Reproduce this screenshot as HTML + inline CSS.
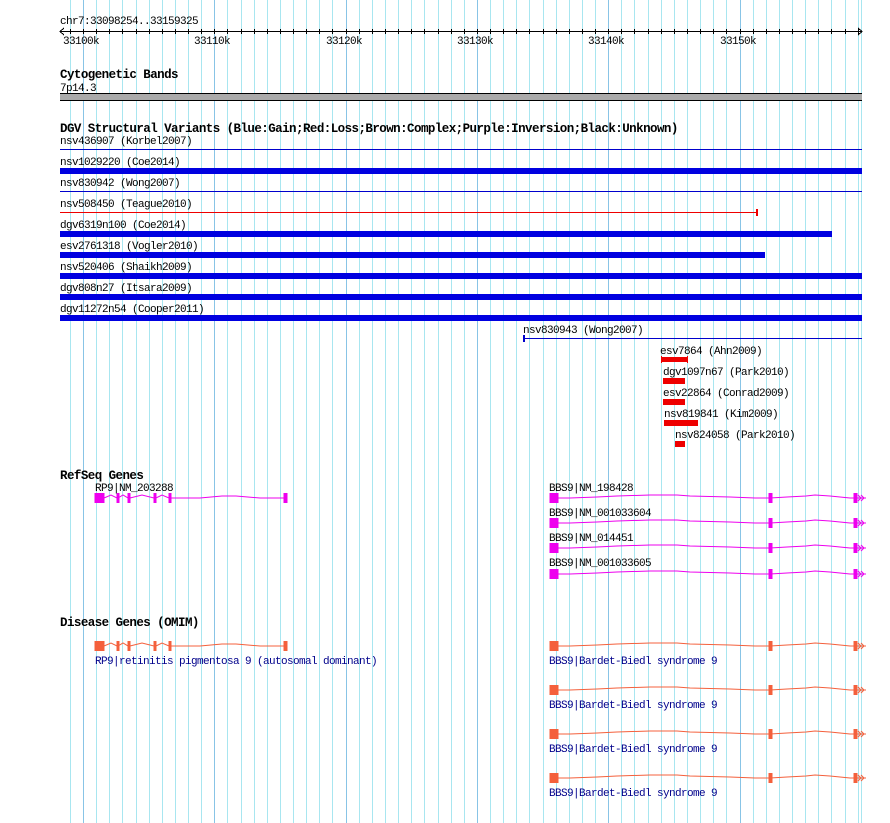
<!DOCTYPE html>
<html><head><meta charset="utf-8"><style>
html,body{margin:0;padding:0;background:#fff;width:890px;height:823px;overflow:hidden}
svg{display:block}
text{font-family:"Liberation Mono",monospace;font-size:11px;letter-spacing:-0.6px;fill:#000}
.b{font-weight:bold;font-size:12.5px;letter-spacing:-0.56px}
.d{fill:#00008b}
</style></head><body>
<svg width="890" height="823" viewBox="0 0 890 823" xmlns="http://www.w3.org/2000/svg" shape-rendering="crispEdges">
<g stroke="#a8e6f0" stroke-width="1" id="grid"></g>
<g id="ticks" stroke="#000"></g>
<line x1="861.5" x2="861.5" y1="0" y2="823" stroke="#a8e6f0"/>
<text x="60" y="24">chr7:33098254..33159325</text>
<line x1="60" x2="862" y1="31.5" y2="31.5" stroke="#000"/>
<polyline points="64,28 60,31.5 64,35" fill="none" stroke="#000"/>
<polyline points="858,28 862,31.5 858,35" fill="none" stroke="#000"/>
<text x="63" y="44">33100k</text><text x="194" y="44">33110k</text><text x="326" y="44">33120k</text><text x="457" y="44">33130k</text><text x="588" y="44">33140k</text><text x="720" y="44">33150k</text>

<text x="60" y="78" class="b">Cytogenetic Bands</text>
<text x="60" y="91">7p14.3</text>
<rect x="60" y="93" width="802" height="8" fill="#000"/>
<rect x="60" y="94" width="802" height="6" fill="#aaaaaa"/>

<text x="60" y="132" class="b">DGV Structural Variants (Blue:Gain;Red:Loss;Brown:Complex;Purple:Inversion;Black:Unknown)</text>
<text x="60" y="144">nsv436907 (Korbel2007)</text>
<rect x="60" y="149" width="802" height="1" fill="#0000cc"/>
<text x="60" y="165">nsv1029220 (Coe2014)</text>
<rect x="60" y="168" width="802" height="6" fill="#0000e0"/>
<text x="60" y="186">nsv830942 (Wong2007)</text>
<rect x="60" y="191" width="802" height="1" fill="#0000cc"/>
<text x="60" y="207">nsv508450 (Teague2010)</text>
<rect x="60" y="212" width="697" height="1" fill="#ee0000"/>
<rect x="756" y="209" width="2" height="7" fill="#ee0000"/>
<text x="60" y="228">dgv6319n100 (Coe2014)</text>
<rect x="60" y="231" width="772" height="6" fill="#0000e0"/>
<text x="60" y="249">esv2761318 (Vogler2010)</text>
<rect x="60" y="252" width="705" height="6" fill="#0000e0"/>
<text x="60" y="270">nsv520406 (Shaikh2009)</text>
<rect x="60" y="273" width="802" height="6" fill="#0000e0"/>
<text x="60" y="291">dgv808n27 (Itsara2009)</text>
<rect x="60" y="294" width="802" height="6" fill="#0000e0"/>
<text x="60" y="312">dgv11272n54 (Cooper2011)</text>
<rect x="60" y="315" width="802" height="6" fill="#0000e0"/>
<text x="523" y="333">nsv830943 (Wong2007)</text>
<rect x="523" y="338" width="339" height="1" fill="#0000cc"/>
<rect x="523" y="335" width="2" height="7" fill="#0000cc"/>
<text x="660" y="354">esv7864 (Ahn2009)</text>
<rect x="661" y="357" width="27" height="5" fill="#ee0000"/>
<rect x="661" y="356" width="1" height="7" fill="#ee0000"/><rect x="687" y="356" width="1" height="7" fill="#ee0000"/>
<text x="663" y="375">dgv1097n67 (Park2010)</text>
<rect x="663" y="378" width="22" height="6" fill="#ee0000"/>
<text x="663" y="396">esv22864 (Conrad2009)</text>
<rect x="663" y="399" width="22" height="6" fill="#ee0000"/>
<text x="664" y="417">nsv819841 (Kim2009)</text>
<rect x="664" y="420" width="34" height="6" fill="#ee0000"/>
<text x="675" y="438">nsv824058 (Park2010)</text>
<rect x="675" y="441" width="10" height="6" fill="#ee0000"/>

<text x="60" y="479" class="b">RefSeq Genes</text>
<defs>
<g id="rp9" shape-rendering="auto">
<rect x="95" y="-4.5" width="9" height="9"/>
<rect x="117" y="-4.5" width="2" height="9"/><rect x="128" y="-4.5" width="2" height="9"/><rect x="154" y="-4.5" width="2" height="9"/><rect x="169" y="-4.5" width="2" height="9"/><rect x="284" y="-4.5" width="3" height="9"/>
<polyline fill="none" stroke-width="1" points="104,0 111,-3 117,0 118,0 123,-3 128,0 130,0 142,-3 154,0 156,0 162,-3 169,0 171,0 200,0 222,-2 236,-2 260,0 285,0"/>
</g>
<g id="bbs" shape-rendering="auto">
<rect x="550" y="-4.5" width="8" height="9"/>
<rect x="769" y="-4.5" width="3" height="9"/>
<rect x="854" y="-4.5" width="3" height="9"/>
<polyline fill="none" stroke-width="1" points="557,0 570,0 597,-1 617,-2 650,-3 677,-3 690,-2 730,-1 755,0 770,0 787,-1 806,-2 815,-3 830,-2 850,0 856,0"/>
<polyline fill="none" stroke-width="1" points="857,0 866,0"/>
<polyline fill="none" stroke-width="1" points="858,-3 861,0 858,3"/>
<polyline fill="none" stroke-width="1" points="861,-3 864,0 861,3"/>
</g>
</defs>
<text x="95" y="491">RP9|NM_203288</text>
<use href="#rp9" y="498" fill="#ee00ee" stroke="#ee00ee"/>
<text x="549" y="491">BBS9|NM_198428</text>
<use href="#bbs" y="498" fill="#ee00ee" stroke="#ee00ee"/>
<text x="549" y="516">BBS9|NM_001033604</text>
<use href="#bbs" y="523" fill="#ee00ee" stroke="#ee00ee"/>
<text x="549" y="541">BBS9|NM_014451</text>
<use href="#bbs" y="548" fill="#ee00ee" stroke="#ee00ee"/>
<text x="549" y="566">BBS9|NM_001033605</text>
<use href="#bbs" y="574" fill="#ee00ee" stroke="#ee00ee"/>

<text x="60" y="626" class="b">Disease Genes (OMIM)</text>
<use href="#rp9" y="646" fill="#f4603c" stroke="#f4603c"/>
<text x="95" y="664" class="d">RP9|retinitis pigmentosa 9 (autosomal dominant)</text>
<use href="#bbs" y="646" fill="#f4603c" stroke="#f4603c"/>
<text x="549" y="664" class="d">BBS9|Bardet-Biedl syndrome 9</text>
<use href="#bbs" y="690" fill="#f4603c" stroke="#f4603c"/>
<text x="549" y="708" class="d">BBS9|Bardet-Biedl syndrome 9</text>
<use href="#bbs" y="734" fill="#f4603c" stroke="#f4603c"/>
<text x="549" y="752" class="d">BBS9|Bardet-Biedl syndrome 9</text>
<use href="#bbs" y="778" fill="#f4603c" stroke="#f4603c"/>
<text x="549" y="796" class="d">BBS9|Bardet-Biedl syndrome 9</text>
</svg>
<script>
(function(){
var NS='http://www.w3.org/2000/svg';
var g=document.getElementById('grid'),tk=document.getElementById('ticks');
for(var k=0;k<61;k++){
 var x=Math.round(69.87+13.13*k)+0.5;
 var l=document.createElementNS(NS,'line');
 l.setAttribute('x1',x);l.setAttribute('x2',x);l.setAttribute('y1',0);l.setAttribute('y2',823);
 if(k%10==1)l.setAttribute('stroke','#88c4e6');
 g.appendChild(l);
 var t=document.createElementNS(NS,'line');
 t.setAttribute('x1',x);t.setAttribute('x2',x);t.setAttribute('y1',29);t.setAttribute('y2',34);
 tk.appendChild(t);
}
})();
</script>
</body></html>
